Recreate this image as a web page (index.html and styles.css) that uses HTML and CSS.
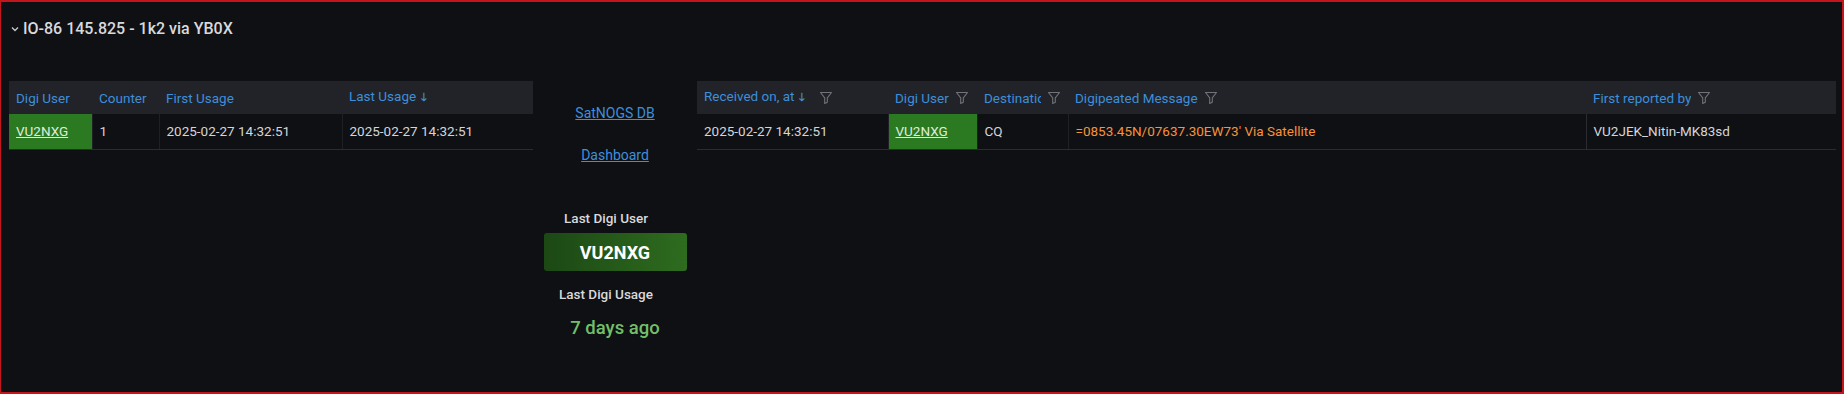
FILE: index.html
```html
<!DOCTYPE html>
<html lang="en">
<head>
  <meta charset="UTF-8" />
  <title>IO-86 145.825 - 1k2 via YB0X</title>
  <link rel="stylesheet" href="styles.css">
</head>
<body>
<div class="frame">
  <div class="row-title">
    <svg class="chevron" width="8" height="6" viewBox="0 0 8 6"><path d="M1 1.5 L4 4.5 L7 1.5" fill="none" stroke="#c7c8ca" stroke-width="1.3"/></svg>
    <span>IO-86 145.825 - 1k2 via YB0X</span>
  </div>

  <div class="panels">
    <!-- Digi users table -->
    <table class="grid left-table">
      <colgroup>
        <col style="width:83px"><col style="width:67px"><col style="width:183px"><col style="width:191px">
      </colgroup>
      <thead>
        <tr>
          <th>Digi User</th>
          <th>Counter</th>
          <th>First Usage</th>
          <th>Last Usage <span class="sort">&#129107;</span></th>
        </tr>
      </thead>
      <tbody>
        <tr>
          <td class="green"><a href="#">VU2NXG</a></td>
          <td>1</td>
          <td>2025-02-27 14:32:51</td>
          <td>2025-02-27 14:32:51</td>
        </tr>
      </tbody>
    </table>

    <!-- Links and stats -->
    <div class="middle">
      <a class="ext-link first" href="#">SatNOGS DB</a>
      <a class="ext-link second" href="#">Dashboard</a>
      <div class="stat-label user-label">Last Digi User</div>
      <div class="stat-box">VU2NXG</div>
      <div class="stat-label usage-label">Last Digi Usage</div>
      <div class="stat-value">7 days ago</div>
    </div>

    <!-- Messages table -->
    <table class="grid right-table">
      <colgroup>
        <col style="width:191px"><col style="width:89px"><col style="width:91px"><col style="width:518px"><col style="width:250px">
      </colgroup>
      <thead>
        <tr>
          <th><div class="th-in"><span class="lbl">Received on, at <span class="sort">&#129107;</span></span><svg class="funnel wide" viewBox="0 0 14 14"><path d="M1.5 1.5 H12.5 L8.3 6.8 V11.2 L5.7 12.5 V6.8 Z"/></svg></div></th>
          <th><div class="th-in"><span class="lbl">Digi User</span><svg class="funnel" viewBox="0 0 14 14"><path d="M1.5 1.5 H12.5 L8.3 6.8 V11.2 L5.7 12.5 V6.8 Z"/></svg></div></th>
          <th><div class="th-in"><span class="lbl">Destination</span><svg class="funnel" viewBox="0 0 14 14"><path d="M1.5 1.5 H12.5 L8.3 6.8 V11.2 L5.7 12.5 V6.8 Z"/></svg></div></th>
          <th><div class="th-in"><span class="lbl">Digipeated Message</span><svg class="funnel" viewBox="0 0 14 14"><path d="M1.5 1.5 H12.5 L8.3 6.8 V11.2 L5.7 12.5 V6.8 Z"/></svg></div></th>
          <th><div class="th-in"><span class="lbl">First reported by</span><svg class="funnel" viewBox="0 0 14 14"><path d="M1.5 1.5 H12.5 L8.3 6.8 V11.2 L5.7 12.5 V6.8 Z"/></svg></div></th>
        </tr>
      </thead>
      <tbody>
        <tr>
          <td>2025-02-27 14:32:51</td>
          <td class="green"><a href="#">VU2NXG</a></td>
          <td>CQ</td>
          <td class="orange">=0853.45N/07637.30EW73' Via Satellite</td>
          <td>VU2JEK_Nitin-MK83sd</td>
        </tr>
      </tbody>
    </table>
  </div>
</div>
</body>
</html>
```

FILE: styles.css
```css
* {
  box-sizing: border-box;
}
body {
  margin: 0;
  background-color: #111217;
  font-family: Roboto, 'Liberation Sans', sans-serif;
  color: #ccccdc;
}
.frame {
  width: 1844px;
  height: 394px;
  border: 2px solid #c3151b;
  border-left-width: 1px;
  background-color: #0f1013;
}
.row-title {
  display: flex;
  align-items: center;
  height: 18px;
  margin-top: 17px;
  padding-left: 10px;
  font-size: 16px;
  font-weight: 500;
  color: #d8d9dc;
}
.chevron {
  margin-right: 4px;
  margin-top: 2px;
}
.panels {
  display: flex;
  align-items: flex-start;
  margin-top: 44px;
  margin-left: 8px;
}
/* Tables */
.grid {
  border-collapse: collapse;
  table-layout: fixed;
  font-size: 13.5px;
}
.left-table {
  width: 524px;
}
.right-table {
  width: 1139px;
}
.grid th {
  height: 33px;
  padding: 0 7px;
  background-color: #212328;
  color: #3d8fdb;
  font-weight: 400;
  text-align: left;
  white-space: nowrap;
  overflow: hidden;
}
.grid td {
  height: 35px;
  padding: 0 7px;
  color: #d4d5d8;
  border-bottom: 1px solid #2a2c31;
  border-right: 1px solid #1e2025;
  white-space: nowrap;
  overflow: hidden;
}
.grid td:last-child {
  border-right: none;
}
.right-table td:nth-child(4) {
  border-right: 1px solid #2a2c31;
}
.grid td.green {
  background-color: #2b7a21;
}
.grid td.green a {
  color: #dfeed9;
  text-decoration: underline;
}
.grid td.orange {
  color: #f7923a;
}
.sort {
  font-size: 11px;
  font-weight: 700;
  margin-left: 1px;
  color: #3d8fdb;
}
.th-in {
  display: flex;
  align-items: center;
}
.th-in .lbl {
  overflow: hidden;
  white-space: nowrap;
}
.funnel {
  flex: none;
  width: 14px;
  height: 14px;
  margin-left: 6px;
  fill: none;
  stroke: #6f7279;
  stroke-width: 1.1;
  stroke-linejoin: round;
}
.funnel.wide {
  margin-left: 14px;
}
/* Middle column */
.middle {
  width: 164px;
  display: flex;
  flex-direction: column;
  align-items: center;
}
.ext-link {
  color: #3d8fdb;
  font-size: 14px;
  line-height: 16px;
  text-decoration: underline;
}
.ext-link.first {
  margin-top: 24px;
}
.ext-link.second {
  margin-top: 26px;
}
.stat-label {
  font-size: 13.5px;
  font-weight: 500;
  line-height: 16px;
  color: #d8d9dc;
  margin-right: 18px;
}
.user-label {
  margin-top: 47px;
}
.usage-label {
  margin-top: 15px;
}
.stat-box {
  width: 143px;
  height: 38px;
  margin-top: 7px;
  border-radius: 3px;
  background: linear-gradient(90deg, #1c4814, #2e6c1f);
  color: #fff;
  font-size: 18px;
  font-weight: 700;
  display: flex;
  align-items: center;
  justify-content: center;
}
.stat-value {
  margin-top: 15px;
  font-size: 18.5px;
  font-weight: 500;
  line-height: 22px;
  color: #73bf69;
}
```
